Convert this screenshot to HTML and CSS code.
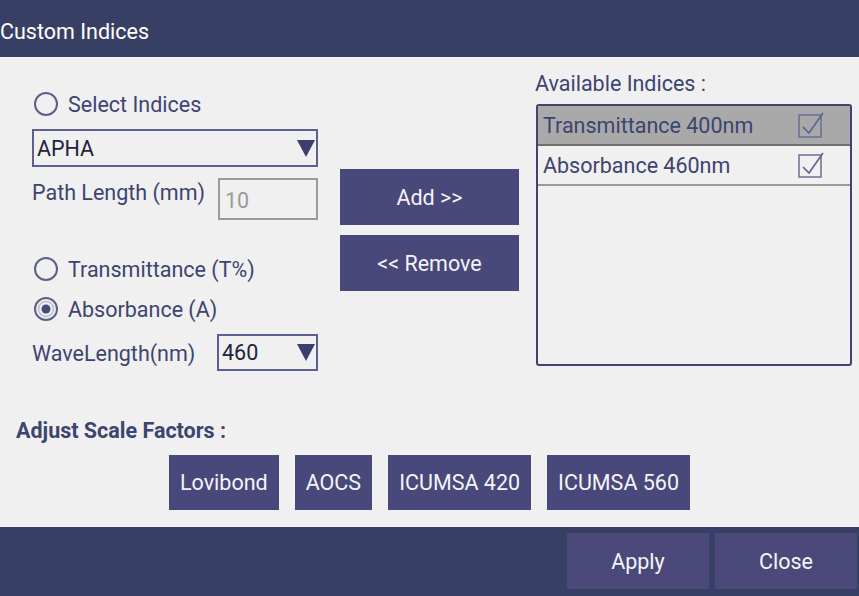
FILE: index.html
```html
<!DOCTYPE html>
<html lang="en">
<head>
    <meta charset="UTF-8">
    <meta name="viewport" content="width=device-width, initial-scale=1.0">
    <title>Custom Indices</title>
    <link rel="stylesheet" href="styles.css">
</head>
<body>
<div class="dialog">
    <div class="titlebar">Custom Indices</div>

    <div class="content">
        <div class="top">
            <div class="left">
                <label class="radio first">
                    <svg width="26" height="26" viewBox="0 0 26 26"><circle cx="13" cy="13" r="11" fill="none" stroke="#5c6185" stroke-width="2"/></svg>
                    <span>Select Indices</span>
                </label>
                <div class="select wide">
                    <span>APHA</span>
                    <svg width="18" height="17" viewBox="0 0 18 17"><polygon points="0,0 18,0 9,17" fill="#3b3f70"/></svg>
                </div>
                <div class="field">
                    <span class="field-label">Path Length (mm)</span>
                    <div class="input">10</div>
                </div>
                <label class="radio gap">
                    <svg width="26" height="26" viewBox="0 0 26 26"><circle cx="13" cy="13" r="11" fill="none" stroke="#5c6185" stroke-width="2"/></svg>
                    <span>Transmittance (T%)</span>
                </label>
                <label class="radio">
                    <svg width="26" height="26" viewBox="0 0 26 26"><circle cx="13" cy="13" r="11" fill="none" stroke="#5c6185" stroke-width="2"/><circle cx="13" cy="13" r="7.5" fill="none" stroke="#b9bccb" stroke-width="1.5"/><circle cx="13" cy="13" r="4.5" fill="#464a78"/></svg>
                    <span>Absorbance (A)</span>
                </label>
                <div class="field wave">
                    <span class="field-label">WaveLength(nm)</span>
                    <div class="select small">
                        <span>460</span>
                        <svg width="18" height="17" viewBox="0 0 18 17"><polygon points="0,0 18,0 9,17" fill="#3b3f70"/></svg>
                    </div>
                </div>
            </div>

            <div class="middle">
                <div class="btn move">Add &gt;&gt;</div>
                <div class="btn move">&lt;&lt; Remove</div>
            </div>

            <div class="right">
                <div class="list-title">Available Indices :</div>
                <div class="list">
                    <div class="list-row selected">
                        <span>Transmittance 400nm</span>
                        <svg width="28" height="30" viewBox="0 0 28 30"><rect x="2" y="6" width="22" height="22" fill="none" stroke="#6a6f98" stroke-width="1.5"/><path d="M6 18 L12 24 L26 4" fill="none" stroke="#5c6190" stroke-width="1.6"/></svg>
                    </div>
                    <div class="list-row">
                        <span>Absorbance 460nm</span>
                        <svg width="28" height="30" viewBox="0 0 28 30"><rect x="2" y="6" width="22" height="22" fill="none" stroke="#6a6f98" stroke-width="1.5"/><path d="M6 18 L12 24 L26 4" fill="none" stroke="#5c6190" stroke-width="1.6"/></svg>
                    </div>
                </div>
            </div>
        </div>

        <div class="scale">
            <div class="scale-title">Adjust Scale Factors :</div>
            <div class="scale-buttons">
                <div class="btn scale-btn">Lovibond</div>
                <div class="btn scale-btn">AOCS</div>
                <div class="btn scale-btn">ICUMSA 420</div>
                <div class="btn scale-btn">ICUMSA 560</div>
            </div>
        </div>
    </div>

    <div class="actions">
        <div class="btn action">Apply</div>
        <div class="btn action">Close</div>
    </div>
</div>
</body>
</html>
```

FILE: styles.css
```css
body{
    margin: 0;
    font-family: Roboto, "Liberation Sans", sans-serif;
    font-size: 21.5px;
    background-color: #f0f0f0;
    color: #3d4470;
}
.dialog{
    width: 859px;
    height: 596px;
    display: flex;
    flex-direction: column;
}
.titlebar{
    height: 57px;
    background-color: #383f65;
    color: #ffffff;
    line-height: 64px;
}

.content{
    height: 470px;
    padding-top: 15px;
    box-sizing: border-box;
}
.top{
    display: flex;
    height: 300px;
}

/* left column */
.left{
    width: 286px;
    margin-left: 32px;
}
.radio{
    display: flex;
    align-items: center;
    height: 40px;
}
.radio svg{
    margin-left: 1px;
    margin-right: 9px;
}
.radio.first{
    margin-top: 12px;
}
.radio.gap{
    margin-top: 29px;
}
.select{
    display: flex;
    align-items: center;
    justify-content: space-between;
    border: 2px solid #5c6090;
    box-sizing: border-box;
    color: #22243a;
    padding: 0 1px 0 3px;
}
.select.wide{
    margin-top: 5px;
    height: 38px;
}
.select.small{
    width: 101px;
    height: 37px;
}
.field{
    display: flex;
    justify-content: space-between;
    align-items: flex-start;
    margin-top: 11px;
}
.field-label{
    line-height: 30px;
}
.input{
    width: 100px;
    height: 42px;
    box-sizing: border-box;
    border: 2px solid #9a9a9a;
    color: #9a9a9a;
    padding-left: 5px;
    line-height: 42px;
}
.field.wave{
    margin-top: 5px;
    align-items: center;
}
.field.wave .field-label{
    margin-top: 2px;
}

/* buttons */
.btn{
    background-color: #49487a;
    color: #f4f4f8;
    display: flex;
    align-items: center;
    justify-content: center;
}
.middle{
    width: 179px;
    margin-left: 22px;
    padding-top: 97px;
}
.move{
    height: 56px;
    margin-bottom: 10px;
}

/* right column */
.right{
    width: 317px;
    margin-left: 16px;
}
.list-title{
    line-height: 24px;
    margin-bottom: 8px;
}
.list{
    margin-left: 1px;
    height: 262px;
    box-sizing: border-box;
    border: 2px solid #3f4570;
    border-radius: 3px;
}
.list-row{
    height: 40px;
    display: flex;
    align-items: center;
    justify-content: space-between;
    padding: 0 25px 0 5px;
    border-bottom: 2px solid #9a9a9a;
    box-sizing: border-box;
}
.list-row svg{
    margin-top: -2px;
}
.list-row.selected{
    background-color: #a9a9a9;
    border-bottom-color: #707070;
}

/* scale factors */
.scale{
    margin-top: 47px;
}
.scale-title{
    font-weight: bold;
    line-height: 24px;
    padding-left: 16px;
}
.scale-buttons{
    display: flex;
    justify-content: center;
    gap: 16px;
    margin-top: 12px;
}
.scale-btn{
    height: 55px;
    padding: 0 11px;
}

/* footer */
.actions{
    height: 69px;
    background-color: #383f65;
    display: flex;
    justify-content: flex-end;
    align-items: flex-start;
    gap: 6px;
    padding: 6px 2px 0 0;
    box-sizing: border-box;
}
.action{
    width: 142px;
    height: 56px;
    background-color: #4a4979;
}
```
